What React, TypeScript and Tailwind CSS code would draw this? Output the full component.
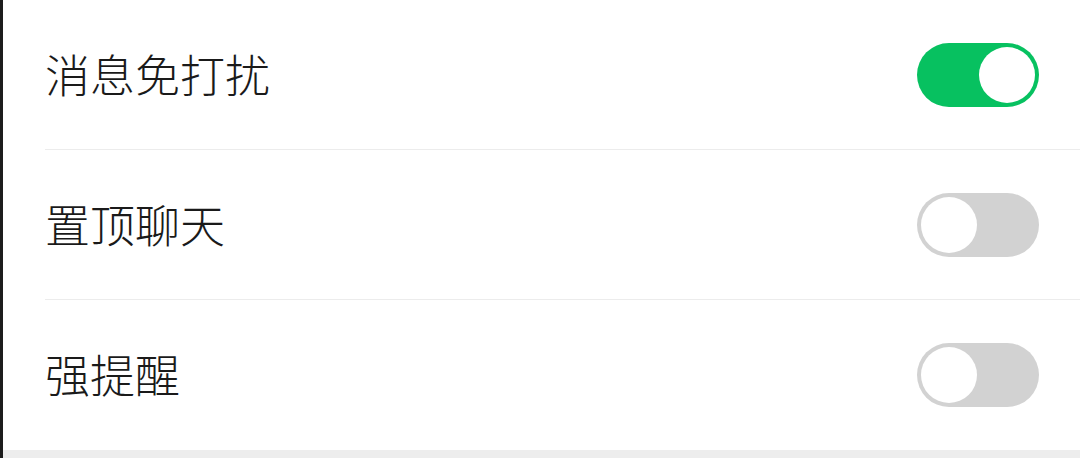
import React, { useState } from "react";

const Toggle = ({ on, onClick }: { on: boolean; onClick: () => void }) => (
  <button
    onClick={onClick}
    className={`relative w-[122px] h-[64px] rounded-full p-[4px] flex items-center ${
      on ? "bg-[#07c160] justify-end" : "bg-[#d2d2d2] justify-start"
    }`}
  >
    <span className="block w-[56px] h-[56px] rounded-full bg-white" />
  </button>
);

export default function App() {
  const [items, setItems] = useState([
    { label: "消息免打扰", on: true },
    { label: "置顶聊天", on: false },
    { label: "强提醒", on: false },
  ]);

  const flip = (i: number) =>
    setItems(items.map((it, j) => (j === i ? { ...it, on: !it.on } : it)));

  return (
    <div
      className="w-[1080px] h-[458px] bg-white border-l-[3px] border-[#1c1c1c] flex flex-col overflow-hidden"
      style={{ fontFamily: '"Noto Sans CJK SC", "Noto Sans", sans-serif' }}
    >
      {items.map((it, i) => (
        <div
          key={it.label}
          className={`ml-[42px] h-[150px] shrink-0 flex items-center justify-between pr-[41px] ${
            i < items.length - 1 ? "border-b border-[#ececec]" : ""
          }`}
        >
          <span className="text-[45px] leading-none text-[#1a1a1a] font-light mb-[3px]">{it.label}</span>
          <Toggle on={it.on} onClick={() => flip(i)} />
        </div>
      ))}
      <div className="flex-1 bg-[#ededed]" />
    </div>
  );
}
